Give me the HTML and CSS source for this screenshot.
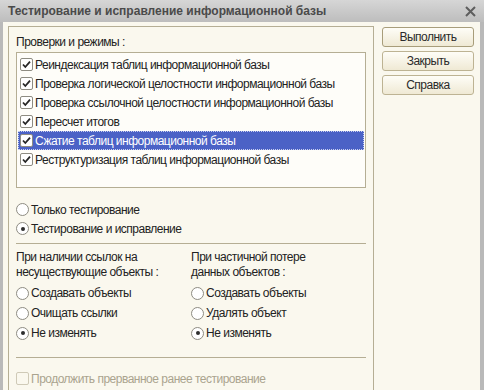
FILE: index.html
```html
<!DOCTYPE html>
<html lang="ru">
<head>
<meta charset="utf-8">
<title>Тестирование и исправление информационной базы</title>
<link rel="stylesheet" href="styles.css">
</head>
<body>
<div class="window">
  <div class="titlebar">
    <span class="title">Тестирование и исправление информационной базы</span>
    <svg class="close" width="11" height="11" viewBox="0 0 11 11"><path d="M1 1L10 10M10 1L1 10" stroke="#5e5e5e" stroke-width="2" fill="none"/></svg>
  </div>
  <div class="body">
    <div class="group">
      <div class="label">Проверки и режимы :</div>
      <div class="list">
        <div class="row"><span class="cb"><svg width="13" height="13" viewBox="0 0 13 13"><path d="M3 6.5L5.3 9L10 3.6" stroke="#262626" stroke-width="1.8" fill="none"/></svg></span>Реиндексация таблиц информационной базы</div>
        <div class="row"><span class="cb"><svg width="13" height="13" viewBox="0 0 13 13"><path d="M3 6.5L5.3 9L10 3.6" stroke="#262626" stroke-width="1.8" fill="none"/></svg></span>Проверка логической целостности информационной базы</div>
        <div class="row"><span class="cb"><svg width="13" height="13" viewBox="0 0 13 13"><path d="M3 6.5L5.3 9L10 3.6" stroke="#262626" stroke-width="1.8" fill="none"/></svg></span>Проверка ссылочной целостности информационной базы</div>
        <div class="row"><span class="cb"><svg width="13" height="13" viewBox="0 0 13 13"><path d="M3 6.5L5.3 9L10 3.6" stroke="#262626" stroke-width="1.8" fill="none"/></svg></span>Пересчет итогов</div>
        <div class="row selected"><span class="cb"><svg width="13" height="13" viewBox="0 0 13 13"><path d="M3 6.5L5.3 9L10 3.6" stroke="#262626" stroke-width="1.8" fill="none"/></svg></span>Сжатие таблиц информационной базы</div>
        <div class="row"><span class="cb"><svg width="13" height="13" viewBox="0 0 13 13"><path d="M3 6.5L5.3 9L10 3.6" stroke="#262626" stroke-width="1.8" fill="none"/></svg></span>Реструктуризация таблиц информационной базы</div>
      </div>

      <div class="modes">
        <div class="opt"><span class="rb"></span>Только тестирование</div>
        <div class="opt"><span class="rb on"></span>Тестирование и исправление</div>
      </div>

      <div class="sep"></div>

      <div class="cols">
        <div class="col">
          <div class="label">При наличии ссылок на<br>несуществующие объекты :</div>
          <div class="opts">
            <div class="opt tall"><span class="rb"></span>Создавать объекты</div>
            <div class="opt tall"><span class="rb"></span>Очищать ссылки</div>
            <div class="opt tall"><span class="rb on"></span>Не изменять</div>
          </div>
        </div>
        <div class="col">
          <div class="label">При частичной потере<br>данных объектов :</div>
          <div class="opts">
            <div class="opt tall"><span class="rb"></span>Создавать объекты</div>
            <div class="opt tall"><span class="rb"></span>Удалять объект</div>
            <div class="opt tall"><span class="rb on"></span>Не изменять</div>
          </div>
        </div>
      </div>

      <div class="sep sep2"></div>

      <div class="opt disabled"><span class="cb off"></span>Продолжить прерванное ранее тестирование</div>
    </div>

    <div class="buttons">
      <div class="btn default">Выполнить</div>
      <div class="btn">Закрыть</div>
      <div class="btn">Справка</div>
    </div>
  </div>
</div>
</body>
</html>
```
FILE: styles.css
```css
html, body {
  margin: 0;
  padding: 0;
}

body {
  font-family: "Liberation Sans", Arial, sans-serif;
  font-size: 12px;
  letter-spacing: -0.5px;
  color: #222222;
  background: #b9b9b9;
}

.window {
  width: 484px;
  height: 390px;
  overflow: hidden;
  display: flex;
  flex-direction: column;
  background: #faf8ee;
}

.titlebar {
  height: 22px;
  flex: none;
  display: flex;
  align-items: center;
  justify-content: space-between;
  padding: 0 8px 0 8px;
  background: linear-gradient(#d6d6d6, #bdbdbd);
  color: #4a4a4a;
  font-weight: bold;
  letter-spacing: 0;
}

.title {
  line-height: 22px;
}

.close {
  display: block;
}

.body {
  flex: 1;
  display: flex;
  align-items: flex-start;
  gap: 8px;
  border-left: 3px solid #b9b9b9;
  border-right: 4px solid #b9b9b9;
  padding: 4px 6px 0 5px;
  background: #faf8ee;
}

.group {
  box-sizing: border-box;
  width: 366px;
  height: 400px;
  flex: none;
  border: 1px solid #b5ae94;
  padding: 8px 7px 0 7px;
}

.label {
  line-height: 15px;
}

.list {
  box-sizing: border-box;
  height: 136px;
  margin-top: 2px;
  border: 1px solid #b5ae94;
  background: #fefdf9;
  padding: 2px 1px;
}

.row {
  height: 19px;
  display: flex;
  align-items: center;
  gap: 2px;
  padding-left: 2px;
  white-space: nowrap;
}

.row.selected {
  background: #4b62c6;
  color: #ffffff;
  outline: 1px dotted #c9d0ef;
  outline-offset: -1px;
}

.cb {
  box-sizing: border-box;
  width: 13px;
  height: 13px;
  flex: none;
  border: 1px solid #8e8c82;
  border-radius: 2px;
  background: #ffffff;
  display: flex;
  align-items: center;
  justify-content: center;
}

.cb svg {
  display: block;
  margin: -1px;
}

.cb.off {
  border-color: #cfcab7;
  background: #faf8ee;
}

.modes {
  margin-top: 12px;
}

.opt {
  height: 19px;
  display: flex;
  align-items: center;
  gap: 2px;
  white-space: nowrap;
}

.opt.tall {
  height: 20px;
}

.rb {
  box-sizing: border-box;
  width: 13px;
  height: 13px;
  flex: none;
  border: 1px solid #8e8c82;
  border-radius: 50%;
  background: #ffffff;
  display: flex;
  align-items: center;
  justify-content: center;
}

.rb.on::after {
  content: "";
  width: 4px;
  height: 4px;
  border-radius: 50%;
  background: #2e2e2e;
}

.sep {
  height: 1px;
  background: #b5ae94;
  margin-top: 5px;
}

.sep2 {
  margin-top: 14px;
}

.cols {
  display: flex;
  margin-top: 6px;
}

.col {
  width: 179px;
}

.opts {
  margin-top: 3px;
}

.disabled {
  margin-top: 11px;
  color: #aaa48f;
}

.buttons {
  width: 92px;
  flex: none;
  display: flex;
  flex-direction: column;
  gap: 4px;
  margin-top: 1px;
}

.btn {
  box-sizing: border-box;
  height: 20px;
  line-height: 18px;
  text-align: center;
  border: 1px solid #bdb393;
  border-radius: 3px;
  background: linear-gradient(#fefdf7, #efe9d4);
  color: #2a2a2a;
}

.btn.default {
  border-color: #a89d7a;
}
```
